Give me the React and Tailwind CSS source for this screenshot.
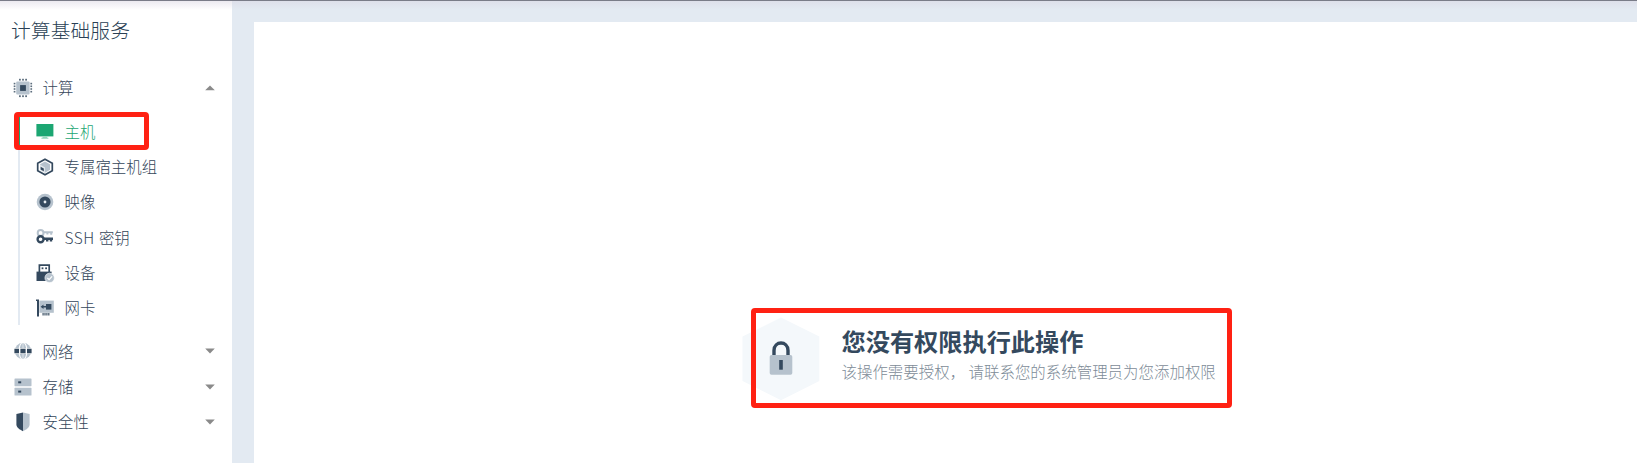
import React from "react";

const DARK = "#34495e";
const SOFT = "#b6c2cd";

function CpuIcon() {
  const pins = [6, 9.1, 12.2];
  const sidePins = [4.8, 7.5, 10.2, 12.9];
  return (
    <svg width="20" height="20" viewBox="0 0 20 20">
      <rect x="3.2" y="3.4" width="13.4" height="13.2" rx="1" fill={SOFT} />
      <rect x="7.1" y="7.1" width="5.8" height="5.8" fill={DARK} />
      <g fill="#5d6e7e">
        {pins.map((p) => (
          <React.Fragment key={p}>
            <rect x={p} y="0.8" width="1.8" height="1.8" />
            <rect x={p} y="17.3" width="1.8" height="1.8" />
          </React.Fragment>
        ))}
        {sidePins.map((p) => (
          <React.Fragment key={p}>
            <rect x="0.7" y={p} width="1.7" height="1.6" />
            <rect x="17.4" y={p} width="1.7" height="1.6" />
          </React.Fragment>
        ))}
      </g>
    </svg>
  );
}

function MonitorIcon() {
  return (
    <svg width="18" height="18" viewBox="0 0 18 18">
      <rect x="0.4" y="1" width="17" height="12.4" fill="#1ca672" />
      <path d="M6.8 13.4h4.2l.4 1.3h1v1H5.4v-1h1z" fill="#93d6bb" />
    </svg>
  );
}

function HostGroupIcon() {
  return (
    <svg width="18" height="18" viewBox="0 0 18 18">
      <path d="M9 1.2 16.3 5.2V12.8L9 16.8 1.7 12.8V5.2Z" fill="#fff" stroke={DARK} strokeWidth="1.7" />
      <path d="M9 3.5 14 6.3V11.8L9 14.8 4 11.8V6.3Z" fill={SOFT} />
      <path d="M4 6.6 9 9.4V14.8L4 11.8Z" fill="#dfe5ea" />
      <path d="M4.6 8.8 7.8 10.6V13.2L4.6 11.4Z" fill={DARK} />
    </svg>
  );
}

function DiscIcon() {
  return (
    <svg width="18" height="18" viewBox="0 0 18 18">
      <circle cx="9" cy="9" r="8.3" fill={SOFT} />
      <circle cx="9" cy="9" r="5.6" fill={DARK} />
      <circle cx="9" cy="9" r="1.4" fill="#e8edf1" />
    </svg>
  );
}

function KeysIcon() {
  return (
    <svg width="18" height="18" viewBox="0 0 18 18">
      <g fill="none" stroke={SOFT} strokeWidth="2">
        <circle cx="4.6" cy="4.9" r="2.9" />
        <path d="M7 4.3H16.8M15.2 4.3V6.8M11.4 4.3V6.4" />
      </g>
      <g fill="none" stroke={DARK} strokeWidth="2.4">
        <circle cx="4.6" cy="11.3" r="3" fill="#fff" />
        <path d="M7.4 10.8H17M11.2 11V13.4M15 11V13.4" />
      </g>
    </svg>
  );
}

function DeviceIcon() {
  return (
    <svg width="20" height="20" viewBox="0 0 20 20">
      <path d="M4.4 9V2.1H14.2V9" fill="#fff" stroke={DARK} strokeWidth="1.7" />
      <rect x="6.6" y="4.4" width="1.8" height="1.8" fill={DARK} />
      <rect x="10.2" y="4.4" width="1.8" height="1.8" fill={DARK} />
      <path d="M1.5 8.6H16.6V18H1.5Z" fill={DARK} />
      <circle cx="14.6" cy="14.9" r="4.7" fill={SOFT} stroke="#fff" strokeWidth="0.6" />
      <path d="m12.4 15 1.7 1.7 3-3.4" fill="none" stroke="#fff" strokeWidth="1.2" />
    </svg>
  );
}

function NicIcon() {
  return (
    <svg width="18" height="18" viewBox="0 0 18 18">
      <path d="M0 .4H3V17.6H1V2H0Z" fill={DARK} />
      <rect x="3.4" y="1.6" width="14.4" height="12.2" fill={SOFT} />
      <rect x="10" y="5" width="5.4" height="5.6" fill={DARK} />
      <path d="M4.6 7.7 7.5 5.5V7H10V8.4H7.5V9.9Z" fill={DARK} />
      <path d="M6.4 15.3H14" stroke="#586a7b" strokeWidth="2.4" strokeDasharray="1.4 .5" />
    </svg>
  );
}

function GlobeIcon() {
  return (
    <svg width="18" height="18" viewBox="0 0 18 18">
      <circle cx="9" cy="9" r="8.3" fill={SOFT} />
      <g fill="none" stroke="#fff" strokeWidth="1.1">
        <ellipse cx="9" cy="9" rx="4" ry="8.6" />
        <path d="M9 0V18" strokeWidth="0.6" />
      </g>
      <path d="M0 6.2H18V11.8H0Z" fill="#fff" />
      <path d="M.4 6.8H5V11.2H.4ZM6.4 6.8H11.6V11.2H6.4ZM13 6.8H17.6V11.2H13Z" fill={DARK} />
    </svg>
  );
}

function StorageIcon() {
  return (
    <svg width="18" height="18" viewBox="0 0 18 18">
      <rect x="0.5" y="0.5" width="17" height="7.7" rx="0.6" fill={SOFT} />
      <rect x="0.5" y="9.8" width="17" height="7.7" rx="0.6" fill={SOFT} />
      <rect x="4.2" y="3.3" width="3" height="2" fill={DARK} />
      <rect x="4.2" y="12.6" width="3" height="2" fill={DARK} />
    </svg>
  );
}

function ShieldIcon() {
  return (
    <svg width="18" height="20" viewBox="0 0 18 20">
      <path d="M9 .6 2.4 1.9V12.6C2.4 15.6 5.5 17.7 9 19.2Z" fill={DARK} />
      <path d="M9 .6 15.6 1.9V12.6C15.6 15.6 12.5 17.7 9 19.2Z" fill={SOFT} />
    </svg>
  );
}

function Caret({ up }) {
  return (
    <svg width="10" height="6" viewBox="0 0 10 6" className="mr-[17.5px] ml-auto">
      <path d={up ? "M.2 5.3 5 .4 9.8 5.3Z" : "M.2 .6H9.8L5 5.5Z"} fill="#8a8a8a" />
    </svg>
  );
}

function Section({ icon, label, up }) {
  return (
    <div className="flex h-[35.2px] items-center pl-[12.5px]">
      <span className="flex w-[20px] justify-center">{icon}</span>
      <span className="ml-[10px]">{label}</span>
      <Caret up={up} />
    </div>
  );
}

function Item({ icon, label, active }) {
  return (
    <div
      className={
        active
          ? "-ml-[2px] flex h-[35.2px] items-center border-l-2 border-[#1ca672] pl-[14.5px] text-[#1ca672]"
          : "flex h-[35.2px] items-center pl-[14.5px]"
      }
    >
      <span className="flex w-[20px] justify-center">{icon}</span>
      <span className="ml-[10px]">{label}</span>
    </div>
  );
}

function LockBadge() {
  return (
    <svg width="78" height="84" viewBox="0 0 78 84" className="shrink-0">
      <path d="M39 .5 77.3 19.5V64L39 83.2.5 64V19.5Z" fill="#f4f8fb" />
      <path d="M32 40V33.4C32 23.6 46 23.6 46 33.4V40" fill="none" stroke={DARK} strokeWidth="3.4" />
      <rect x="27.7" y="38" width="22.6" height="19.8" rx="1.8" fill={SOFT} />
      <rect x="37.2" y="43" width="3.6" height="9.7" fill={DARK} />
    </svg>
  );
}

export default function App() {
  return (
    <div className="relative flex h-[463px] w-[1637px] overflow-hidden bg-[#e3eaf2] font-['Noto_Sans_CJK_SC',sans-serif] text-[15.4px] leading-none font-light tracking-[0.06px] text-[#34465a]">
      <aside className="w-[232px] shrink-0 bg-white">
        <h1 className="flex h-[70px] items-center pb-[10px] pl-[11px] text-[19.8px] text-[#2a3f54]">计算基础服务</h1>
        <nav>
          <Section icon={<CpuIcon />} label="计算" up />
          <div className="mt-[9px] mb-[8.5px] ml-[18px] border-l-2 border-[#e3eaf2]">
            <Item icon={<MonitorIcon />} label="主机" active />
            <Item icon={<HostGroupIcon />} label="专属宿主机组" />
            <Item icon={<DiscIcon />} label="映像" />
            <Item
              icon={<KeysIcon />}
              label={
                <>
                  <span className="tracking-[0.6px]">SSH </span>密钥
                </>
              }
            />
            <Item icon={<DeviceIcon />} label="设备" />
            <Item icon={<NicIcon />} label="网卡" />
          </div>
          <Section icon={<GlobeIcon />} label="网络" />
          <Section icon={<StorageIcon />} label="存储" />
          <Section icon={<ShieldIcon />} label="安全性" />
        </nav>
      </aside>
      <main className="mt-[22px] ml-[22px] flex-1 bg-white pt-[295px] pl-[488px]">
        <div className="flex">
          <LockBadge />
          <div className="ml-[21.5px] pt-[11px] whitespace-nowrap">
            <h2 className="text-[24.2px] leading-[26px] font-bold tracking-normal text-[#34495e]">您没有权限执行此操作</h2>
            <p className="mt-[7px] leading-[20px] text-[#7d8b97]">该操作需要授权， 请联系您的系统管理员为您添加权限</p>
          </div>
        </div>
      </main>
      <div className="absolute inset-x-0 top-0 h-[10px] border-t border-[#7a7c88] bg-linear-to-b from-[#d9d5e2]/50 to-transparent" />
      <div className="absolute top-[112px] left-[14px] h-[38px] w-[135px] rounded-[4px] border-[5px] border-[#ff2113]" />
      <div className="absolute top-[307.5px] left-[751px] h-[100px] w-[481px] rounded-[4px] border-[5px] border-[#ff2113]" />
    </div>
  );
}
